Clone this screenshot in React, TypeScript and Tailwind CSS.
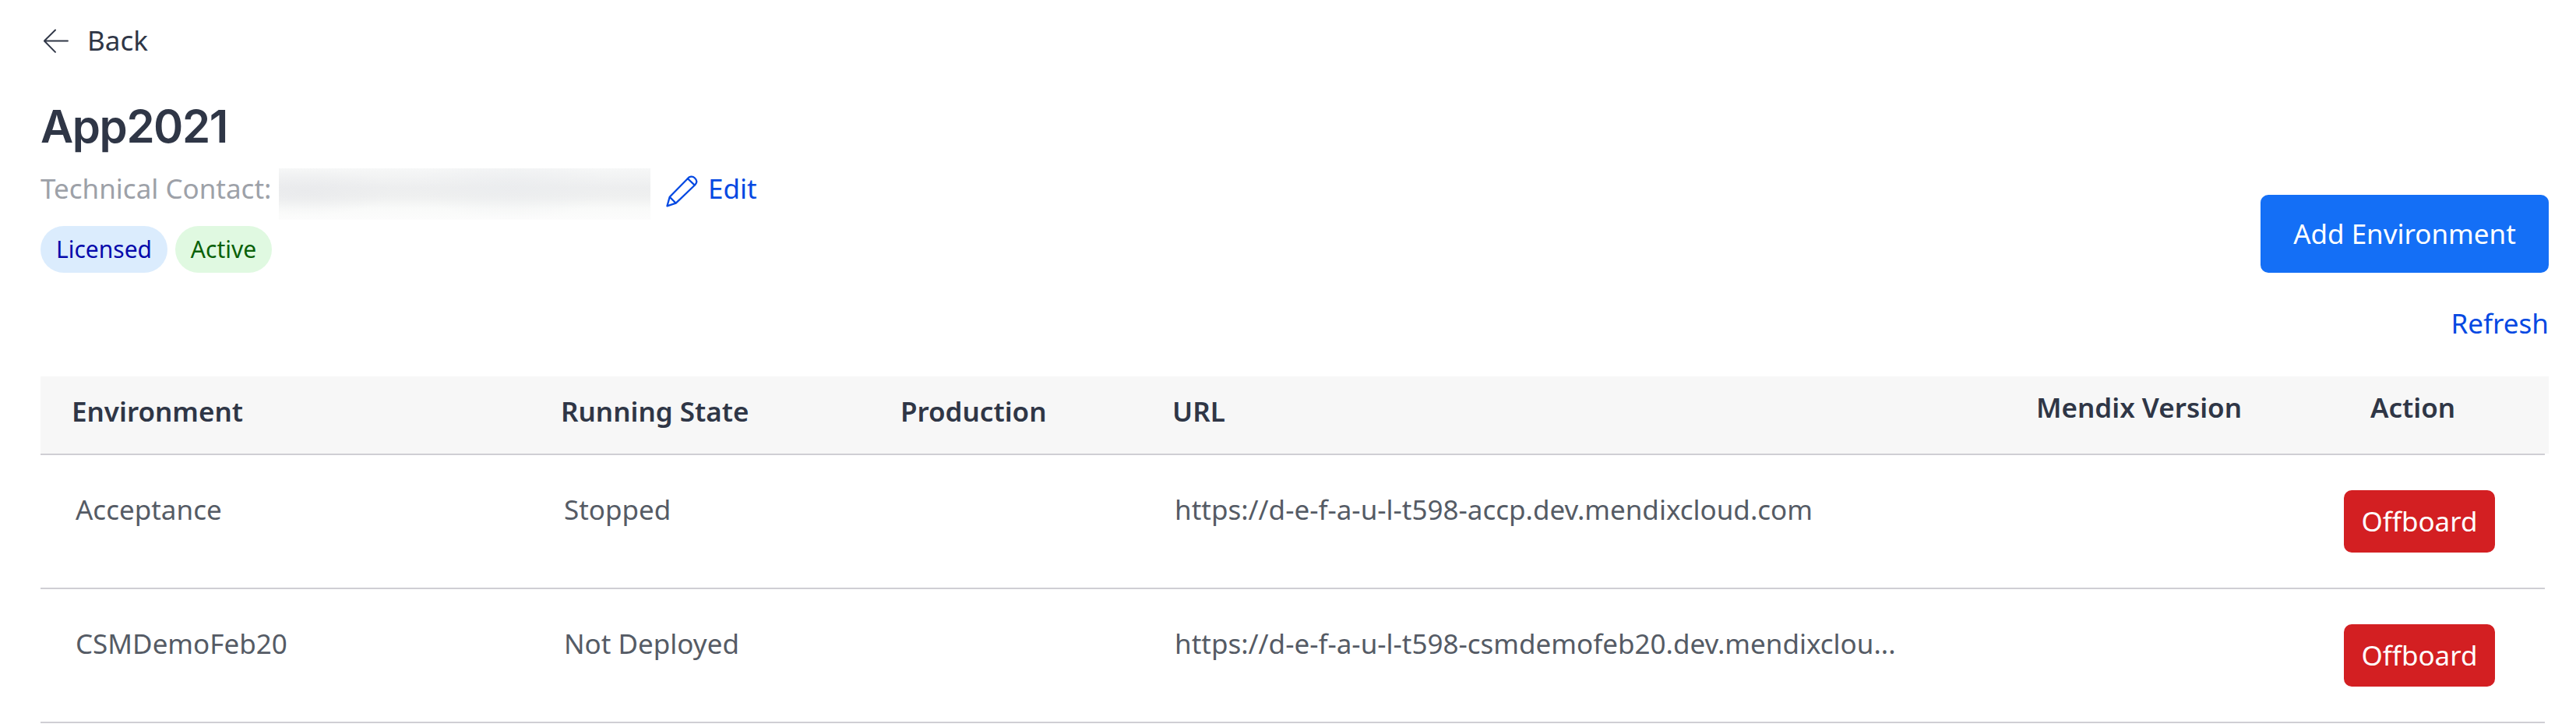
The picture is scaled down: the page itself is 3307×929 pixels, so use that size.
import React from "react";

const environments = [
  { name: "Acceptance", state: "Stopped", url: "https://d-e-f-a-u-l-t598-accp.dev.mendixcloud.com" },
  { name: "CSMDemoFeb20", state: "Not Deployed", url: "https://d-e-f-a-u-l-t598-csmdemofeb20.dev.mendixclou..." },
];

function ArrowLeft() {
  return (
    <svg className="h-8 w-8 shrink-0" viewBox="0 0 32 32" fill="none" stroke="currentColor" strokeWidth="1.9" strokeLinecap="round" strokeLinejoin="round">
      <path d="M31 16.500H1M15 2.500 0.900 16.500 15 30.800" />
    </svg>
  );
}

function Pencil() {
  return (
    <svg className="mt-2 h-[42px] w-[42px] shrink-0" viewBox="0 0 42 42" fill="none" stroke="currentColor" strokeWidth="2.3" strokeLinecap="round" strokeLinejoin="round">
      <path d="M1.500 40.300 4.700 28.700 28 5C30 2.500 34 1.600 37 4.500S40 10.500 37.500 13L12.700 36.700 1.500 40.300ZM27.700 5 36.800 13.600M4.700 28.700 12.700 36.700" />
    </svg>
  );
}

export default function App() {
  return (
    <div className="h-[929px] w-[3307px] overflow-hidden bg-white pl-[52px] pr-[35px] pt-7 font-['Noto_Sans',sans-serif] text-[35px] leading-[48px] text-[#2f3646]">
      <div className="flex h-12 items-center pl-1">
        <ArrowLeft />
        <span className="ml-6">Back</span>
      </div>

      <div className="flex justify-between">
        <div>
          <h1 className="mt-[51px] h-[71px] font-['Inter',sans-serif] text-[58px] font-semibold leading-[70px] tracking-[-1.4px]">App2021</h1>
          <div className="mt-[18px] flex h-[66px] items-start">
            <span className="mt-0.5 w-[306px] shrink-0 whitespace-nowrap text-[#9da1a8]">Technical Contact:</span>
            <span className="h-[66px] w-[477px] shrink-0 bg-[radial-gradient(ellipse_110px_30px_at_35px_30px,#e7e8eb99,transparent),radial-gradient(ellipse_120px_44px_at_300px_22px,#e9ebee88,transparent),linear-gradient(to_bottom,#f6f7f7,#edeeef_38%,#eff0f0_55%,#f9faf9_78%,#fcfcfc)]" />
            <button className="ml-5 flex items-start text-[#0549e2]">
              <Pencil />
              <span className="ml-3 mt-0.5">Edit</span>
            </button>
          </div>
          <div className="mt-2 flex gap-2.5 text-[30px] leading-[60px]">
            <span className="h-[60px] w-[163px] rounded-full bg-[#dbecfd] text-center text-[#0508ab]">Licensed</span>
            <span className="h-[60px] w-[124px] rounded-full bg-[#e0f9e1] text-center text-[#0a6108]">Active</span>
          </div>
        </div>
        <div className="flex flex-col items-end pt-[174px]">
          <button className="h-[100px] w-[370px] rounded-[10px] bg-[#146ff6] text-white">Add Environment</button>
          <button className="mt-[41px] h-12 text-[#0549e2]">Refresh</button>
        </div>
      </div>

      <div className="mt-11">
        <div className="flex h-[99px] bg-[#f7f7f7] pt-[21px] font-semibold">
          <span className="w-[628px] pl-10">Environment</span>
          <span className="w-[435px] pl-10">Running State</span>
          <span className="w-[350px] pl-[41px]">Production</span>
          <span className="w-[1097px] pl-10">URL</span>
          <span className="-mt-[5px] w-[430px] pl-[52px]">Mendix Version</span>
          <span className="-mt-[5px] pl-[51px]">Action</span>
        </div>
        <div className="mr-[5px] border-t-2 border-[#cfced4]">
          {environments.map((env) => (
            <div key={env.name} className="flex h-[172px] border-b-2 border-[#cfced4] pt-[45px] text-[#555b65]">
              <span className="mt-px w-[628px] pl-[45px]">{env.name}</span>
              <span className="mt-px w-[785px] pl-11">{env.state}</span>
              <span className="mt-px w-[1544px] pl-[43px]">{env.url}</span>
              <button className="h-20 w-[194px] rounded-[10px] bg-[#d31f22] text-white">Offboard</button>
            </div>
          ))}
        </div>
      </div>
    </div>
  );
}
